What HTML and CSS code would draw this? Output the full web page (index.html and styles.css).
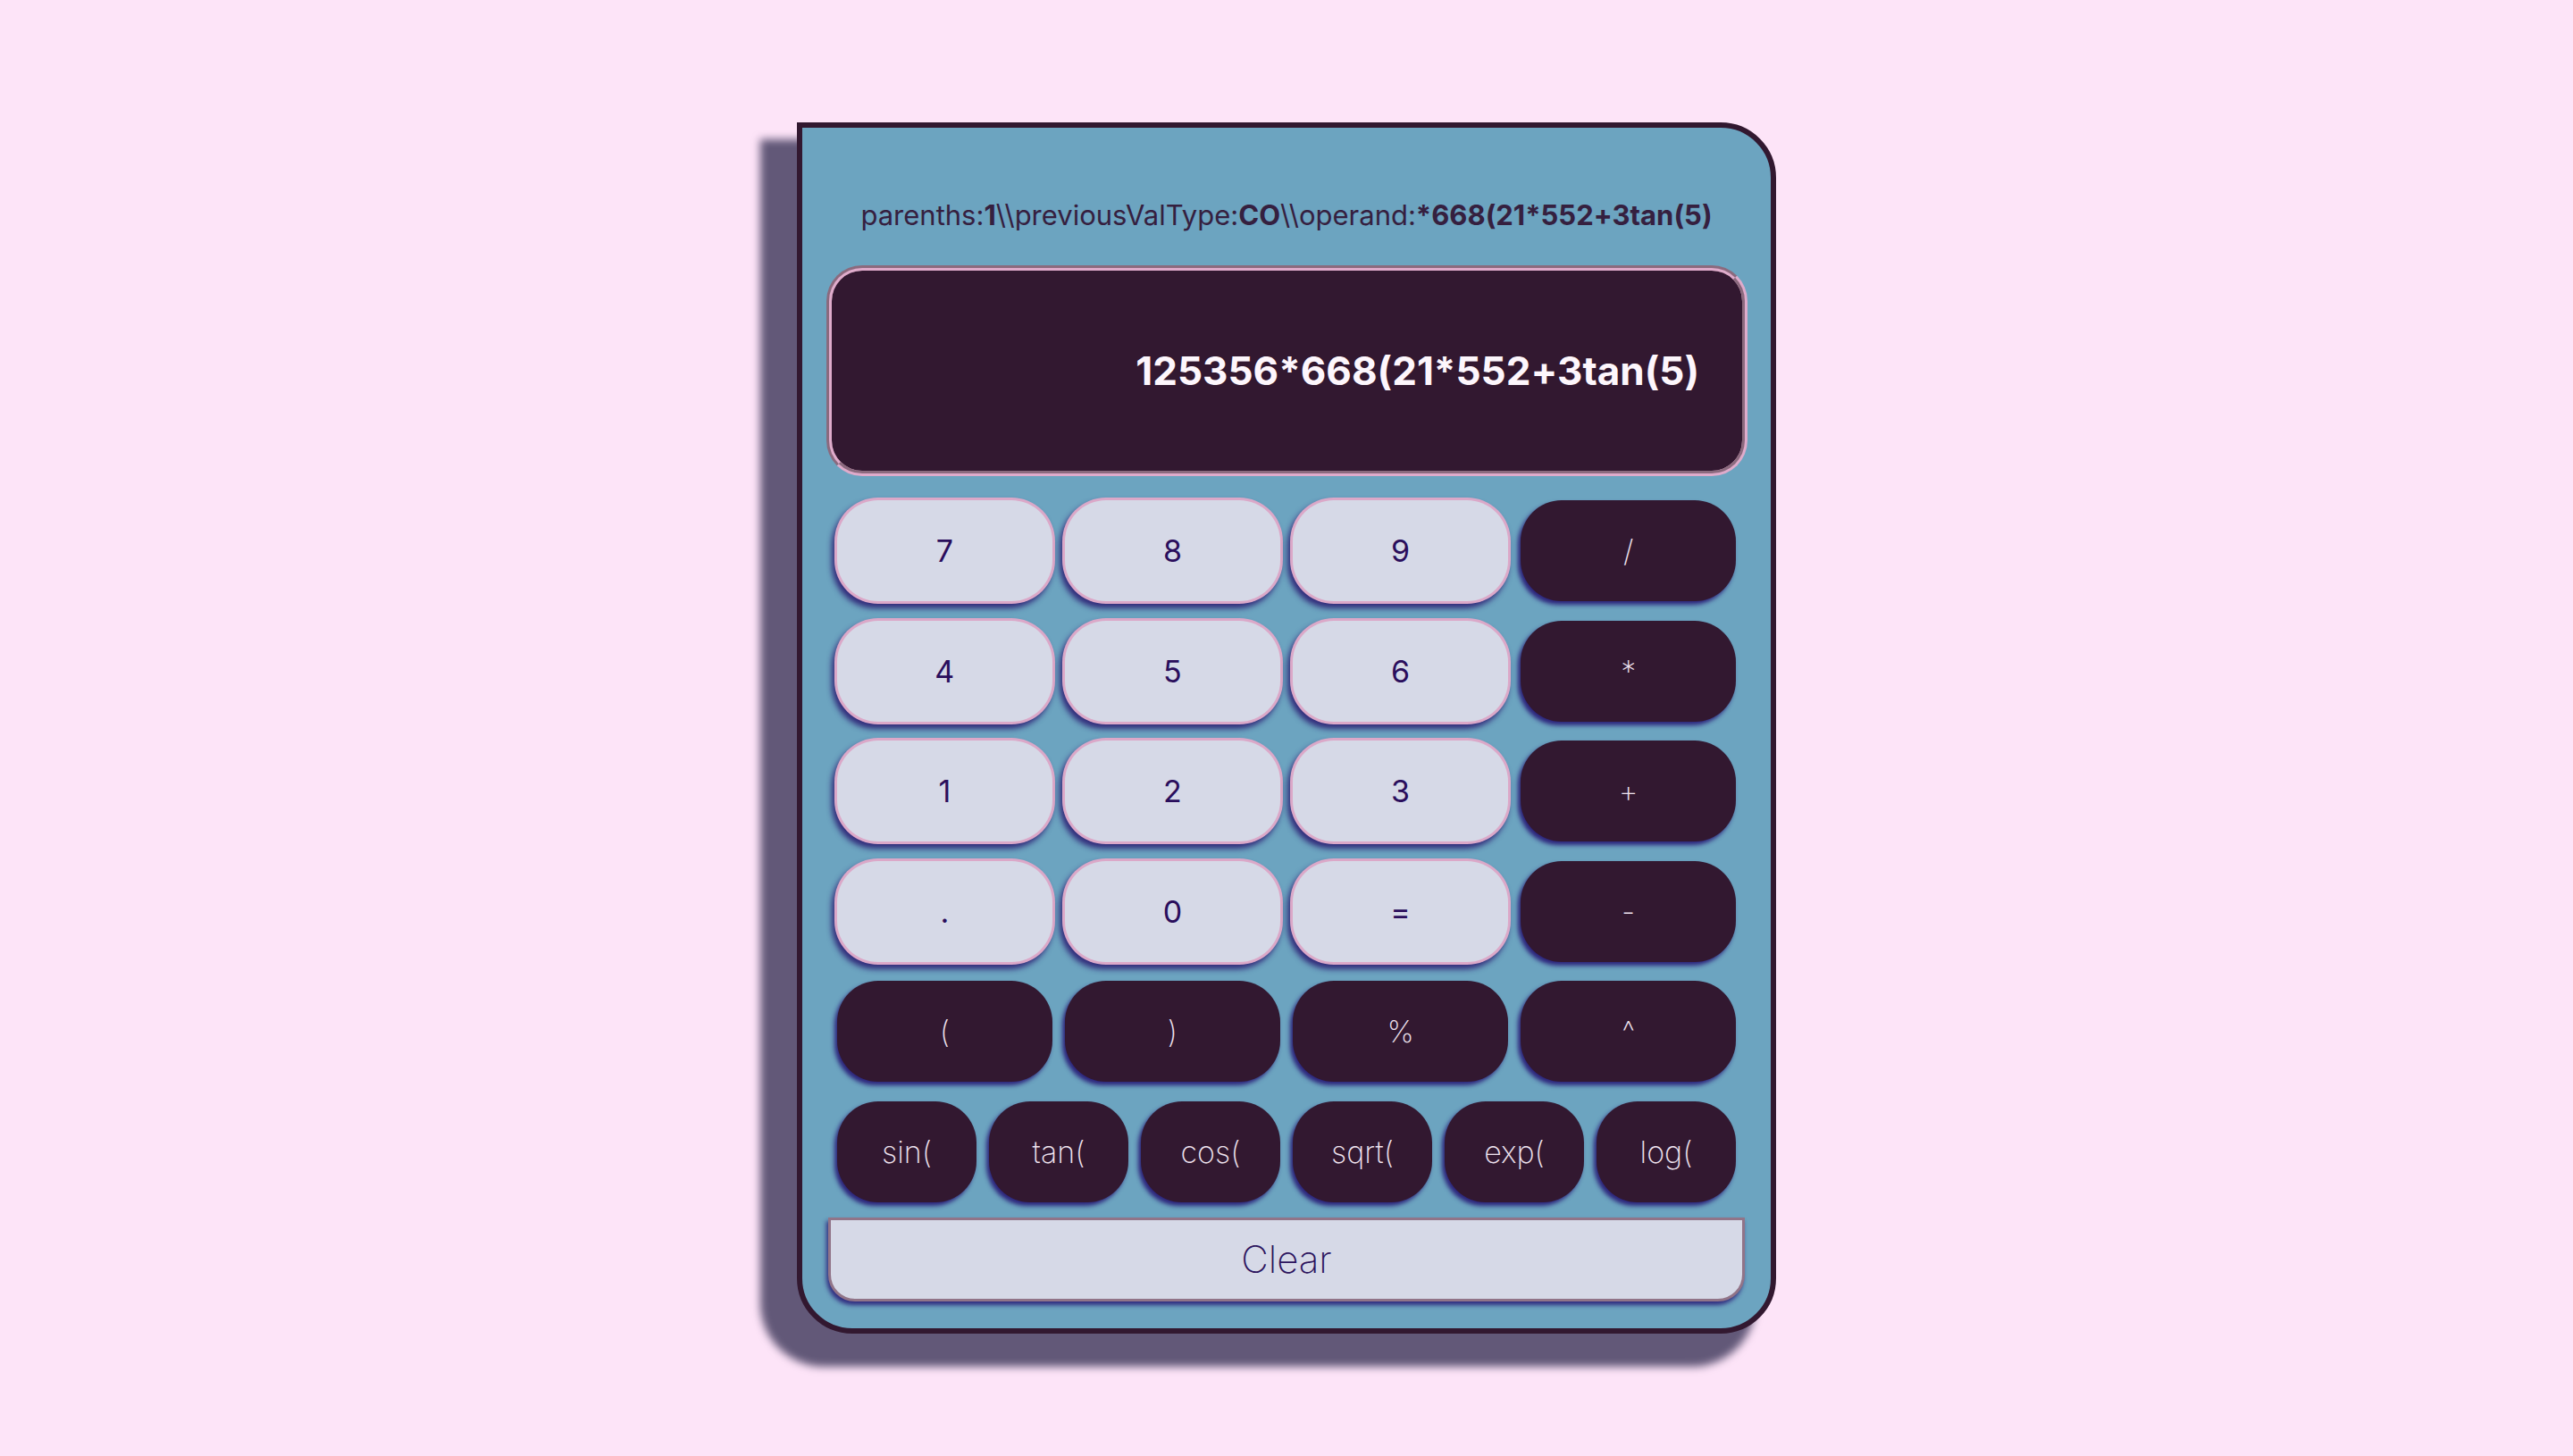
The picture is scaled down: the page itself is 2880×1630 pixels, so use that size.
FILE: index.html
```html
<!DOCTYPE html>
<html lang="en">
<head>
<meta charset="utf-8">
<title>Calculator</title>
<link rel="stylesheet" href="styles.css">
</head>
<body>
<div class="page">
  <div class="calc">
    <p class="status">parenths:<b>1</b>\\previousValType:<b>CO</b>\\operand:<b>*668(21*552+3tan(5)</b></p>
    <div class="display"><span class="display-text">125356*668(21*552+3tan(5)</span></div>
    <div class="keys">
      <div class="row">
        <button class="key light">7</button>
        <button class="key light">8</button>
        <button class="key light">9</button>
        <button class="key dark">/</button>
      </div>
      <div class="row">
        <button class="key light">4</button>
        <button class="key light">5</button>
        <button class="key light">6</button>
        <button class="key dark">*</button>
      </div>
      <div class="row">
        <button class="key light">1</button>
        <button class="key light">2</button>
        <button class="key light">3</button>
        <button class="key dark">+</button>
      </div>
      <div class="row">
        <button class="key light">.</button>
        <button class="key light">0</button>
        <button class="key light">=</button>
        <button class="key dark">-</button>
      </div>
      <div class="row">
        <button class="key dark">(</button>
        <button class="key dark">)</button>
        <button class="key dark">%</button>
        <button class="key dark">^</button>
      </div>
      <div class="row funcs">
        <button class="key dark">sin(</button>
        <button class="key dark">tan(</button>
        <button class="key dark">cos(</button>
        <button class="key dark">sqrt(</button>
        <button class="key dark">exp(</button>
        <button class="key dark">log(</button>
      </div>
    </div>
    <button class="clear">Clear</button>
  </div>
</div>
</body>
</html>
```

FILE: styles.css
```css
* {
  box-sizing: border-box;
}

html, body {
  margin: 0;
  padding: 0;
}

body {
  background: #fde4f8;
  font-family: Inter, "Noto Sans", "Liberation Sans", sans-serif;
  font-feature-settings: "calt" 0;
}

.page {
  height: 100vh;
  display: flex;
  align-items: center;
  justify-content: center;
}

.calc {
  width: 1096px;
  background: #6ca4c0;
  border: 6px solid #321830;
  border-radius: 0 62px 62px 62px;
  box-shadow: -32px 28px 10px 9px #625878;
  padding: 78px 0 30px;
  display: flex;
  flex-direction: column;
}

.status {
  margin: 0;
  height: 40px;
  line-height: 40px;
  font-size: 31px;
  font-weight: 400;
  color: #35203f;
  text-align: center;
  white-space: nowrap;
}

.status b {
  font-weight: 700;
}

.display {
  margin: 36px 26px 0 27px;
  height: 236px;
  background: #321830;
  border: 6px groove #dfabcb;
  border-radius: 40px;
  display: flex;
  align-items: center;
  justify-content: flex-end;
  padding-right: 48px;
}

.display-text {
  color: #fdf6fc;
  font-size: 44px;
  font-weight: 700;
  white-space: nowrap;
}

.keys {
  margin: 27px 39px 0;
  display: flex;
  flex-direction: column;
  gap: 21.5px;
}

.row {
  display: flex;
  gap: 14.5px;
  height: 113px;
}

.funcs {
  gap: 14px;
}

.key {
  flex: 1 1 0;
  min-width: 0;
  height: 113px;
  border: none;
  padding: 0;
  margin: 0;
  border-radius: 46px;
  font-family: Inter, "Noto Sans", "Liberation Sans", sans-serif;
  font-feature-settings: "calt" 0;
  display: flex;
  align-items: center;
  justify-content: center;
}

.light {
  background: #d6d9e7;
  color: #2a0e5c;
  font-size: 34px;
  font-weight: 400;
  box-shadow: 0 0 0 3px #dba8c8, -3px 5px 6px 3px rgba(40, 24, 110, 0.85);
}

.dark {
  background: #321830;
  color: #efe3ef;
  font-size: 34px;
  font-weight: 200;
  box-shadow: -3px 4px 5px rgba(38, 22, 115, 0.9);
}

.clear {
  margin: 17px 29px 0;
  height: 94px;
  background: #d6d9e7;
  border: 3px solid #917488;
  border-radius: 0 0 30px 30px;
  box-shadow: -2px 4px 5px rgba(38, 22, 115, 0.85);
  font-family: Inter, "Noto Sans", "Liberation Sans", sans-serif;
  font-size: 42px;
  font-weight: 200;
  color: #2c145e;
  padding: 0;
}
```
